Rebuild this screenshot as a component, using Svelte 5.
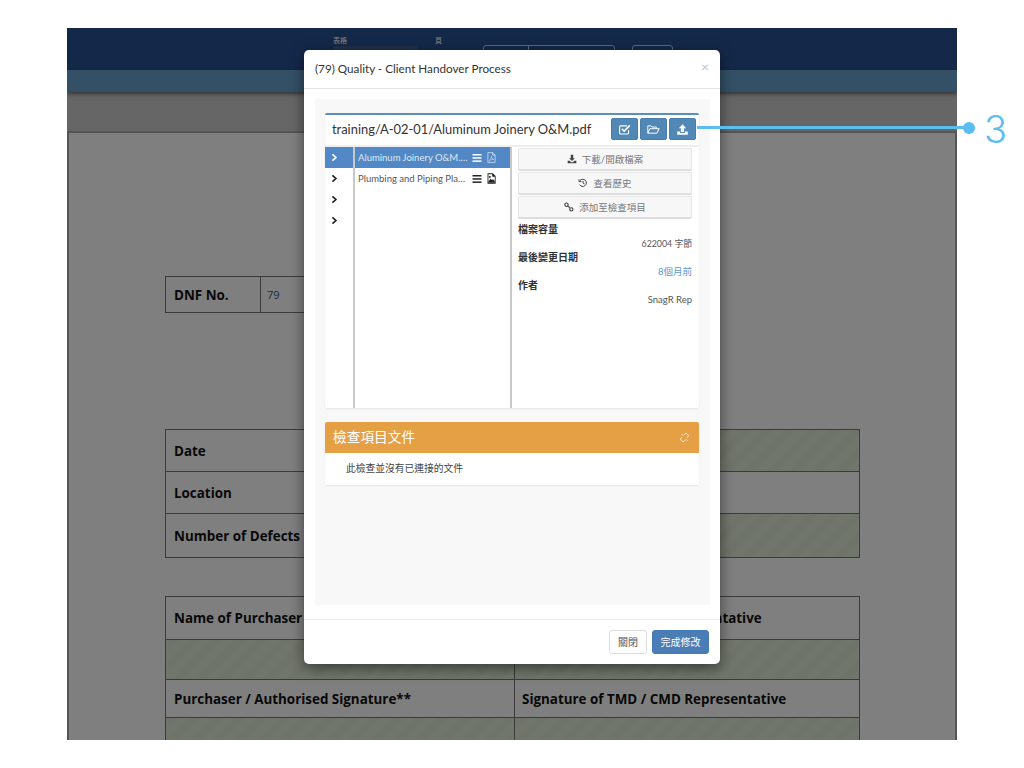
<script>
  const files = [
    { name: 'Aluminum Joinery O&M.pdf', type: 'pdf', active: true },
    { name: 'Plumbing and Piping Plan.png', type: 'image', active: false }
  ];

  const actions = [
    { label: '下載/開啟檔案', icon: 'download' },
    { label: '查看歷史', icon: 'history' },
    { label: '添加至檢查項目', icon: 'link' }
  ];

  const folders = [0, 1, 2, 3];
</script>

<div class="page">
  <div class="window">
    <header class="topbar">
      <div class="field">
        <span class="field-label">表格</span>
        <span class="field-input"></span>
      </div>
      <div class="field page-field">
        <span class="field-label">頁</span>
      </div>
      <span class="top-btn wide"><i></i></span>
      <span class="top-btn small"></span>
    </header>
    <div class="subbar"></div>

    <main class="workspace">
      <div class="paper">
        <div class="sheet dnf">
          <div class="cell head">DNF No.</div>
          <div class="cell value">79</div>
        </div>

        <div class="sheet info">
          <div class="cell head">Date</div>
          <div class="cell hatch"></div>
          <div class="cell head">Location</div>
          <div class="cell"></div>
          <div class="cell head">Number of Defects</div>
          <div class="cell hatch"></div>
        </div>

        <div class="sheet sign">
          <div class="cell head">Name of Purchaser</div>
          <div class="cell head">Name of TMD / CMD Representative</div>
          <div class="cell hatch"></div>
          <div class="cell hatch"></div>
          <div class="cell head">Purchaser / Authorised Signature**</div>
          <div class="cell head">Signature of TMD / CMD Representative</div>
          <div class="cell hatch"></div>
          <div class="cell hatch"></div>
        </div>
      </div>
    </main>

    <div class="backdrop"></div>
  </div>

  <section class="modal">
    <div class="modal-head">
      <h4>(79) Quality - Client Handover Process</h4>
      <span class="close">×</span>
    </div>

    <div class="modal-body">
      <div class="panel">
        <div class="card browser">
          <div class="path-row">
            <span class="path">training/A-02-01/Aluminum Joinery O&amp;M.pdf</span>
            <div class="path-btns">
              <button class="icon-btn" aria-label="select">
                <svg viewBox="0 0 16 16" fill="none" stroke="currentColor" stroke-width="1.4">
                  <path d="M13 9v3.2a1.3 1.3 0 0 1-1.3 1.3H3.3A1.3 1.3 0 0 1 2 12.200V4.800A1.300 1.300 0 0 1 3.300 3.500H11" />
                  <path d="M4.800 7.300 7.600 10 14.500 3" stroke-width="2" />
                </svg>
              </button>
              <button class="icon-btn" aria-label="folder">
                <svg viewBox="0 0 16 16" fill="none" stroke="currentColor" stroke-width="1.2" stroke-linejoin="round">
                  <path d="M1 12.500V3.500h4l1.300 1.500h5.200v2" />
                  <path d="M1 12.500 3.500 7h11.500l-2.800 5.500z" />
                </svg>
              </button>
              <button class="icon-btn" aria-label="upload">
                <svg viewBox="0 0 16 16" fill="currentColor">
                  <path d="M8 1.500 12.500 6.500H10v4.500H6V6.500H3.500z" />
                  <path d="M1.500 10.500H5v1.800h6v-1.800h3.500v4h-13z" />
                </svg>
              </button>
            </div>
          </div>

          <div class="columns">
            <div class="folder-col">
              {#each folders as f (f)}
                <div class="folder-row" class:active={f === 0}>
                  <svg viewBox="0 0 10 12" fill="none" stroke="currentColor" stroke-width="2.400">
                    <path d="M2 1.500 7 6 2 10.500" />
                  </svg>
                </div>
              {/each}
            </div>

            <div class="file-col">
              {#each files as file (file.name)}
                <div class="file-row" class:active={file.active}>
                  <span class="file-name">{file.name}</span>
                  <svg class="bars" viewBox="0 0 10 10" fill="currentColor">
                    <rect x="0.500" y="1" width="9" height="1.500" />
                    <rect x="0.500" y="4.200" width="9" height="1.500" />
                    <rect x="0.500" y="7.400" width="9" height="1.500" />
                  </svg>
                  {#if file.type === 'pdf'}
                    <svg class="doc" viewBox="0 0 10 12" fill="none" stroke="currentColor" stroke-width="0.800">
                      <path d="M1 .6h5.400L9 3.200v8.200H1z" />
                      <path d="M6.200.8v2.600H9" />
                      <path d="M2.600 9.600C4 8.400 5 6 4.800 4.800 5.400 6.800 6.200 7.800 7.600 8.200 5.800 8 4 8.600 2.600 9.600z" stroke-width="0.600" />
                    </svg>
                  {:else}
                    <svg class="doc" viewBox="0 0 10 12">
                      <path d="M.6.200h6L9.600 3.200v8.600H.6z" fill="#222" />
                      <path d="M1.600 1.200h4.200v2.800h2.800v6.800H1.600z" fill="#fff" />
                      <path d="M1.600 10.800V9.200L4 6.200l1.500 1.600 1.200-1 1.900 2.200v1.800z" fill="#222" />
                      <circle cx="3.200" cy="4.200" r="1.100" fill="#222" />
                    </svg>
                  {/if}
                </div>
              {/each}
            </div>

            <div class="detail-col">
              <div class="actions">
                {#each actions as action (action.label)}
                  <button class="action">
                    {#if action.icon === 'download'}
                      <svg viewBox="0 0 12 12" fill="currentColor">
                        <path d="M4.500 1h3v4h2L6 8.500 2.500 5h2z" />
                        <path d="M.8 8h2.400L5 9.800h2L8.800 8h2.400v3H.8z" />
                      </svg>
                    {:else if action.icon === 'history'}
                      <svg viewBox="0 0 12 12" fill="none" stroke="currentColor" stroke-width="1.200">
                        <path d="M2.300 3.200A4.300 4.300 0 1 1 2 8" />
                        <path d="M1.200 1.500v2.800H4" />
                        <path d="M6 3.500V6l1.800 1" />
                      </svg>
                    {:else}
                      <svg viewBox="0 0 12 12" fill="none" stroke="currentColor" stroke-width="1.300">
                        <circle cx="3" cy="3.200" r="2" />
                        <circle cx="8.800" cy="8.800" r="2" />
                        <path d="M4.500 4.700 7.300 7.300" />
                      </svg>
                    {/if}
                    {action.label}
                  </button>
                {/each}
              </div>

              <dl class="meta">
                <dt>檔案容量</dt>
                <dd>622004 字節</dd>
                <dt>最後變更日期</dt>
                <dd class="link">8個月前</dd>
                <dt>作者</dt>
                <dd>SnagR Rep</dd>
              </dl>
            </div>
          </div>
        </div>

        <div class="card linked">
          <div class="linked-head">
            <span>檢查項目文件</span>
            <svg viewBox="0 0 12 12" fill="none" stroke="currentColor" stroke-width="1.100">
              <path d="M5 2.500 6.500 1.300a2 2 0 0 1 3 0l1 1a2 2 0 0 1 0 2.800L9.500 6.300" />
              <path d="M7 9.500 5.500 10.700a2 2 0 0 1-3 0l-1-1a2 2 0 0 1 0-2.800L2.500 5.700" />
              <path d="M8 8.500 10 10.500M4 3.500 2 1.500" />
            </svg>
          </div>
          <p class="linked-empty">此檢查並沒有已連接的文件</p>
        </div>
      </div>
    </div>

    <div class="modal-foot">
      <button class="btn">關閉</button>
      <button class="btn primary">完成修改</button>
    </div>
  </section>

  <div class="callout">
    <span class="callout-line"></span>
    <span class="callout-dot"></span>
    <span class="callout-num">3</span>
  </div>
</div>

<style>
  :global(body) {
    font-family: Lato, "Noto Sans CJK TC", sans-serif;
    background-color: #fff;
    margin: 0;
    padding: 0;
    color: #333;
  }

  .page {
    position: relative;
    width: 1024px;
    height: 768px;
    overflow: hidden;
    box-sizing: border-box;
    padding: 28px 67px;
  }

  button {
    font-family: inherit;
    cursor: pointer;
  }

  /* App behind the dialog */
  .window {
    position: relative;
    height: 712px;
    overflow: hidden;
    display: flex;
    flex-direction: column;
    background-color: #ccc;
  }

  .backdrop {
    position: absolute;
    inset: 0;
    background-color: rgba(0, 0, 0, 0.5);
  }

  .topbar {
    flex: 0 0 41px;
    box-sizing: border-box;
    background-color: #295192;
    display: flex;
    padding: 7px 0 0 266px;
    color: #fff;
  }

  .field {
    width: 102px;
    display: flex;
    flex-direction: column;
    gap: 1px;
  }

  .field-label {
    font-size: 7px;
    line-height: 10px;
  }

  .field-input {
    display: block;
    width: 85px;
    height: 24px;
    background-color: #3d6098;
    border-radius: 2px;
  }

  .page-field {
    width: 48px;
  }

  .top-btn {
    height: 24px;
    margin-top: 10px;
    box-sizing: border-box;
    border: 1px solid #c5d0e0;
    border-radius: 3px;
  }

  .top-btn i {
    display: block;
    width: 1px;
    height: 100%;
    margin-left: 44px;
    background-color: #c5d0e0;
  }

  .top-btn.wide {
    width: 132px;
    margin-right: 17px;
  }

  .top-btn.small {
    width: 41px;
  }

  .subbar {
    flex: 0 0 22px;
    background-color: #68a0cf;
    box-shadow: 0 2px 4px rgba(0, 0, 0, 0.5);
    position: relative;
  }

  .workspace {
    flex: 1;
    padding-top: 39px;
    min-height: 0;
  }

  .paper {
    height: 100%;
    box-sizing: border-box;
    background-color: #fff;
    border: 2px solid #aaa;
    border-bottom: none;
    padding: 143px 95px 0 96px;
    font-family: "Open Sans", sans-serif;
    color: #111;
  }

  .sheet {
    display: grid;
    border: 1px solid #777;
    border-bottom: none;
    font-size: 13.400px;
  }

  .cell {
    box-sizing: border-box;
    border-bottom: 1px solid #777;
    display: flex;
    align-items: center;
    padding-left: 8px;
  }

  .head {
    font-weight: 700;
    white-space: nowrap;
  }

  .hatch {
    background: repeating-linear-gradient(135deg, #dde8d2 0 8px, #e3edd9 8px 16px);
  }

  .dnf {
    grid-template-columns: 94px 120px;
    grid-auto-rows: 36px;
    width: 215px;
    margin-bottom: 116px;
  }

  .dnf .value {
    border-left: 1px solid #777;
    padding-left: 6px;
    font-weight: 400;
    font-size: 11px;
    color: #2a5295;
  }

  .info {
    grid-template-columns: 1fr 1fr;
    grid-template-rows: 42px 42px 44px;
    margin-bottom: 38px;
  }

  .sign {
    grid-template-columns: 348px 1fr;
    grid-template-rows: 43px 40px 38px 40px;
  }

  .sign .cell:nth-child(even) {
    border-left: 1px solid #777;
    padding-left: 7px;
  }

  /* Dialog */
  .modal {
    position: absolute;
    left: 304px;
    top: 50px;
    width: 416px;
    height: 614px;
    box-sizing: border-box;
    background-color: #fff;
    border-radius: 5px;
    box-shadow: 0 4px 14px rgba(0, 0, 0, 0.5);
    display: flex;
    flex-direction: column;
  }

  .modal-head {
    flex: 0 0 39px;
    box-sizing: border-box;
    border-bottom: 1px solid #e5e5e5;
    display: flex;
    align-items: center;
    justify-content: space-between;
    padding: 0 11px 2px;
  }

  .modal-head h4 {
    margin: 0;
    font-size: 11.700px;
    font-weight: 400;
    color: #333;
  }

  .close {
    font-size: 14px;
    color: #c4c4c4;
    margin-top: -4px;
  }

  .modal-body {
    flex: 1;
    padding: 10px 10px 14px 11px;
    min-height: 0;
  }

  .panel {
    height: 100%;
    box-sizing: border-box;
    background-color: #f8f8f8;
    padding: 14px 11px 0 10px;
    display: flex;
    flex-direction: column;
    gap: 14px;
  }

  .card {
    background-color: #fff;
    box-shadow: 0 1px 2px rgba(0, 0, 0, 0.08);
  }

  .browser {
    height: 295px;
    box-sizing: border-box;
    border-top: 2px solid #5a8fbd;
    border-radius: 2px;
    display: flex;
    flex-direction: column;
  }

  .path-row {
    flex: 0 0 30px;
    display: flex;
    align-items: center;
    justify-content: space-between;
    padding: 0 3px 0 7px;
    border-bottom: 2px solid #eee;
  }

  .path {
    font-size: 12.900px;
    color: #333;
    margin-top: -2px;
  }

  .path-btns {
    display: flex;
    gap: 2px;
    margin-top: -2px;
  }

  .icon-btn {
    width: 27px;
    height: 22px;
    padding: 0;
    border: 1px solid #4a7ea8;
    border-radius: 2px;
    background-color: #5288b5;
    color: #fff;
    display: flex;
    align-items: center;
    justify-content: center;
  }

  .icon-btn svg {
    width: 13px;
    height: 13px;
  }

  .columns {
    flex: 1;
    display: flex;
    min-height: 0;
  }

  .folder-col {
    width: 28px;
    flex-shrink: 0;
  }

  .folder-row {
    height: 21px;
    display: flex;
    align-items: center;
    padding-left: 6px;
    color: #222;
  }

  .folder-row svg {
    width: 7px;
    height: 9px;
  }

  .folder-row.active {
    background-color: #5288c5;
    color: #fff;
  }

  .file-col {
    width: 155px;
    flex-shrink: 0;
    border-left: 2px solid #c8c8c8;
    border-right: 2px solid #c8c8c8;
  }

  .file-row {
    height: 21px;
    display: flex;
    align-items: center;
    padding: 0 15px 0 3px;
    font-size: 9.500px;
    color: #555;
  }

  .file-row.active {
    background-color: #5288c5;
    color: #dfe9f5;
  }

  .file-name {
    width: 110px;
    flex-shrink: 0;
    white-space: nowrap;
    overflow: hidden;
    text-overflow: ellipsis;
    margin-right: 4px;
  }

  .bars {
    width: 10px;
    height: 10px;
    color: #222;
    margin-right: 5px;
    flex-shrink: 0;
  }

  .active .bars {
    color: #fff;
  }

  .doc {
    width: 9px;
    height: 11px;
    flex-shrink: 0;
  }

  .detail-col {
    flex: 1;
    padding: 1px 7px 0 6px;
  }

  .actions {
    display: flex;
    flex-direction: column;
    gap: 1px;
    margin-bottom: 4px;
  }

  .action {
    height: 23px;
    padding: 0;
    border: 1px solid #e6e6e6;
    border-bottom: 2px solid #ddd;
    border-radius: 2px;
    background-color: #f7f7f7;
    color: #777;
    font-size: 9.500px;
    display: flex;
    align-items: center;
    justify-content: center;
    gap: 5px;
  }

  .action svg {
    width: 10px;
    height: 10px;
    color: #444;
  }

  .meta {
    margin: 0;
    font-size: 10px;
    line-height: 14px;
  }

  .meta dt {
    font-weight: 700;
    color: #333;
    line-height: 12px;
    margin-bottom: 2px;
  }

  .meta dd {
    margin: 0;
    text-align: right;
    font-size: 9.500px;
    color: #555;
  }

  .meta dd:first-of-type {
    font-size: 8.800px;
  }

  .meta dd.link {
    color: #5b96cc;
  }

  .linked {
    border-radius: 2px;
  }

  .linked-head {
    height: 31px;
    box-sizing: border-box;
    background-color: #e5a045;
    border-radius: 2px 2px 0 0;
    color: #fff;
    display: flex;
    align-items: center;
    justify-content: space-between;
    padding: 0 10px 4px 8px;
    font-size: 13.700px;
  }

  .linked-head svg {
    width: 9px;
    height: 9px;
    margin-top: 4px;
  }

  .linked-empty {
    margin: 0;
    height: 32px;
    padding-left: 21px;
    font-size: 9.750px;
    line-height: 31px;
    color: #444;
  }

  .modal-foot {
    flex: 0 0 45px;
    box-sizing: border-box;
    border-top: 1px solid #eee;
    display: flex;
    justify-content: flex-end;
    align-items: flex-start;
    gap: 5px;
    padding: 10px 11px 0 0;
  }

  .btn {
    height: 24px;
    padding: 0 8px 2px;
    border: 1px solid #ddd;
    border-radius: 3px;
    background-color: #fff;
    color: #555;
    font-size: 10px;
  }

  .btn.primary {
    padding: 0 7.500px 2px;
    border-color: #467cb5;
    background-color: #4a7cb5;
    color: #fff;
  }

  /* Annotation over the screenshot */
  .callout {
    position: absolute;
    left: 697px;
    top: 108px;
    width: 320px;
    height: 40px;
  }

  .callout-line {
    position: absolute;
    left: 0;
    top: 18px;
    width: 272px;
    height: 3px;
    background-color: #5bbdf2;
  }

  .callout-dot {
    position: absolute;
    left: 266px;
    top: 14px;
    width: 12px;
    height: 12px;
    border-radius: 50%;
    background-color: #5bbdf2;
  }

  .callout-num {
    position: absolute;
    left: 287px;
    top: 1px;
    font-family: "Inter", sans-serif;
    font-weight: 300;
    font-size: 38px;
    line-height: 40px;
    color: #5bbdf2;
  }
</style>
